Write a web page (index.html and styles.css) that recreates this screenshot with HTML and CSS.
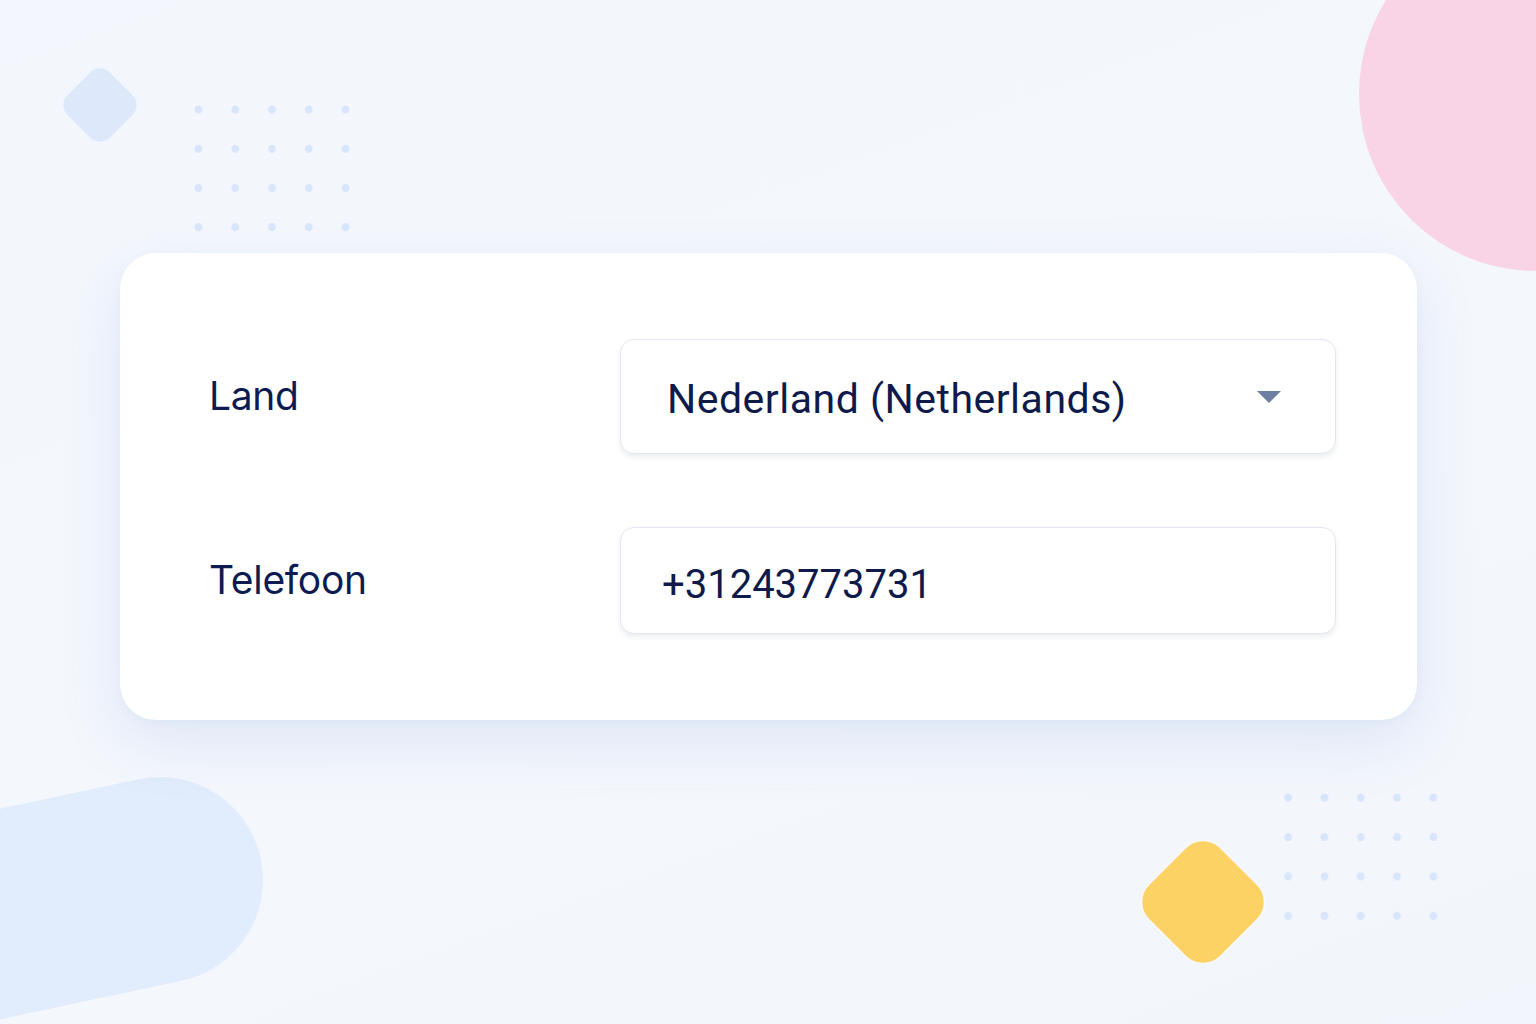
FILE: index.html
```html
<!DOCTYPE html>
<html lang="nl">
<head>
  <meta charset="UTF-8">
  <meta name="viewport" content="width=device-width, initial-scale=1.0">
  <title>Contactgegevens</title>
  <link rel="stylesheet" href="styles.css">
</head>
<body>
  <div class="stage">
    <div class="deco circle-pink"></div>
    <div class="deco pill-blue"></div>
    <div class="deco diamond-blue"></div>
    <div class="deco diamond-yellow"></div>
    <div class="deco dots dots-top"></div>
    <div class="deco dots dots-bottom"></div>

    <div class="card">
      <label class="label" for="country">Land</label>
      <div class="field select" id="country">
        <span class="value">Nederland (Netherlands)</span>
        <span class="caret"></span>
      </div>

      <label class="label" for="phone">Telefoon</label>
      <div class="field phone" id="phone">
        <span class="value">+31243773731</span>
      </div>
    </div>
  </div>
</body>
</html>
```

FILE: styles.css
```css
* {
  margin: 0;
  padding: 0;
  box-sizing: border-box;
}

body {
  width: 1536px;
  height: 1024px;
  overflow: hidden;
  font-family: Roboto, "Liberation Sans", sans-serif;
  background: linear-gradient(160deg, #f3f7fd, #f4f7fc 60%, #f2f6fc);
}

.stage {
  position: relative;
  width: 1536px;
  height: 1024px;
  overflow: hidden;
  padding-top: 253px;
}

/* background shapes */
.deco {
  position: absolute;
}

.circle-pink {
  width: 354px;
  height: 354px;
  left: 1359px;
  top: -83px;
  border-radius: 50%;
  background-color: #f9d4e6;
}

.pill-blue {
  width: 520px;
  height: 206px;
  left: -257px;
  top: 777px;
  border-radius: 103px;
  background-color: #e1ecfc;
  transform-origin: calc(100% - 103px) 50%;
  transform: rotate(-12deg);
}

.diamond-blue {
  width: 60px;
  height: 60px;
  left: 70px;
  top: 75px;
  border-radius: 14px;
  background-color: #dde9fb;
  transform: rotate(45deg);
}

.diamond-yellow {
  width: 100px;
  height: 100px;
  left: 1153px;
  top: 852px;
  border-radius: 24px;
  background-color: #fbd263;
  transform: rotate(45deg);
  box-shadow: 0 0 4px rgba(255, 255, 255, 0.9);
}

.dots {
  background-image: radial-gradient(circle, #d9e5fb 3.6px, transparent 4.3px);
}

.dots-top {
  left: 180px;
  top: 90px;
  width: 184px;
  height: 157px;
  background-size: 36.8px 39.2px;
}

.dots-bottom {
  left: 1270px;
  top: 778px;
  width: 182px;
  height: 158px;
  background-size: 36.3px 39.4px;
}

/* card */
.card {
  position: relative;
  width: 1297px;
  height: 467px;
  margin-left: 120px;
  padding: 86px 81px 86px 89px;
  display: grid;
  grid-template-columns: 411px 1fr;
  grid-template-rows: 115px 107px;
  row-gap: 73px;
  align-items: center;
  background-color: #fff;
  border-radius: 36px;
  box-shadow: 0 22px 60px rgba(110, 150, 215, 0.16), 0 2px 8px rgba(110, 150, 215, 0.06);
}

.label {
  font-family: Inter, Roboto, sans-serif;
  font-size: 39px;
  color: #0d1b52;
  letter-spacing: -0.3px;
  margin-top: -3px;
}

.field {
  height: 100%;
  display: flex;
  align-items: center;
  background-color: #fff;
  border: 1px solid #e3e8f0;
  border-radius: 14px;
  box-shadow: 0 3px 5px rgba(40, 60, 110, 0.09);
  color: #0d1a4a;
  font-size: 40px;
}

.select {
  padding: 4px 54px 0 46px;
  justify-content: space-between;
  font-size: 41px;
  letter-spacing: 0.5px;
}

.phone {
  padding: 8px 0 0 41px;
}

.caret {
  width: 0;
  height: 0;
  border-left: 12.5px solid transparent;
  border-right: 12.5px solid transparent;
  border-top: 12px solid #6d7fa3;
  margin-top: -4px;
}
```
